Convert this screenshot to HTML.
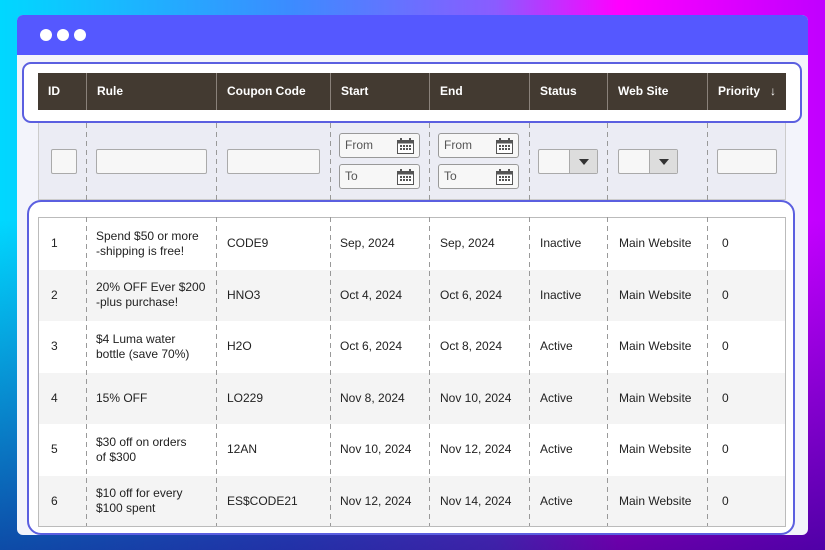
<!DOCTYPE html>
<html><head><meta charset="utf-8"><style>
*{box-sizing:border-box;margin:0;padding:0}
body{width:825px;height:550px;overflow:hidden;font-family:"Liberation Sans",sans-serif;position:relative;
background:linear-gradient(180deg,rgba(0,0,0,0) 40%,rgba(20,0,120,0.65) 100%),linear-gradient(90deg,#00d8ff 0%,#3b8cff 35%,#8a5cff 60%,#ff00ff 75%,#c000ff 100%);}
.win{position:absolute;left:17px;top:15px;width:791px;height:520px;background:#f3f4fb;border-radius:6px;overflow:hidden}
.bar{height:40px;background:#5558ff;position:relative}
.dot{position:absolute;top:14px;width:12px;height:12px;border-radius:50%;background:#fff}
.hbox{position:absolute;left:22px;top:62px;width:780px;height:61px;background:#fff;border:2px solid #5b5fe0;border-radius:9px}
.dbox{position:absolute;left:27px;top:200px;width:768px;height:335px;background:#fff;border:2px solid #5b5fe0;border-radius:14px}
.abs{position:absolute}
.hdr{left:38px;top:73px;width:748px;height:37px;background:#433a31;color:#fff;font-weight:bold;font-size:12px}
.hdr div{position:absolute;top:0;height:37px;line-height:37px;padding-left:10px;border-left:1px solid #8a817a}
.filt{left:38px;top:123px;width:748px;height:77px;background:#ebecf4;border:1px solid #ccc;border-top:none}
.vl{position:absolute;width:1px;background:repeating-linear-gradient(180deg,#999 0 5px,transparent 5px 9px)}
.inp{position:absolute;background:#f7f7f7;border:1px solid #aaa;border-radius:2px;height:25px}
.dt{position:absolute;height:25px;width:81px;border:1px solid #999;border-radius:3px;background:#f7f7f7;font-size:12px;color:#555;line-height:23px;padding-left:5px}
.cal{position:absolute;right:5px;top:4px;width:17px;height:16px}
.sel{position:absolute;top:149px;width:60px;height:25px;border:1px solid #aaa;border-radius:2px;background:#f7f7f7}
.sel span{position:absolute;right:0;top:0;width:28px;height:23px;background:#ddd;border-left:1px solid #aaa}
.sel span:after{content:"";position:absolute;left:9px;top:9px;border:5px solid transparent;border-top:6px solid #333}
.tbl{left:38px;top:217px;width:748px;height:310px;border:1px solid #bbb;overflow:hidden}
.row{position:absolute;left:0;width:748px;height:51.5px;font-size:12px;color:#222}
.row div{position:absolute;top:0;height:100%;display:flex;align-items:center;line-height:15px}
</style></head><body>
<svg width="0" height="0" style="position:absolute"><defs><symbol id="c" viewBox="0 0 17 16"><rect x="0.5" y="2.5" width="16" height="13" fill="#fff" stroke="#555"/><rect x="0.5" y="2.5" width="16" height="3" fill="#555"/><rect x="3" y="0" width="2" height="4" fill="#555"/><rect x="12" y="0" width="2" height="4" fill="#555"/><g fill="#555"><rect x="3" y="7" width="2" height="2"/><rect x="6" y="7" width="2" height="2"/><rect x="9" y="7" width="2" height="2"/><rect x="12" y="7" width="2" height="2"/><rect x="3" y="10" width="2" height="2"/><rect x="6" y="10" width="2" height="2"/><rect x="9" y="10" width="2" height="2"/><rect x="12" y="10" width="2" height="2"/></g></symbol></defs></svg>
<div class="win"><div class="bar"><div class="dot" style="left:23px"></div><div class="dot" style="left:40px"></div><div class="dot" style="left:57px"></div></div></div>
<div class="abs hbox"></div>
<div class="abs hdr">
<div style="left:0;border:none">ID</div><div style="left:48px">Rule</div><div style="left:178px">Coupon Code</div><div style="left:292px">Start</div><div style="left:391px">End</div><div style="left:491px">Status</div><div style="left:569px">Web Site</div><div style="left:669px;width:79px">Priority &nbsp;&nbsp;↓</div>
</div>
<div class="abs filt"></div>
<div class="dbox"></div>
<div class="abs tbl">
<div class="row" style="top:0;background:#fff"><div style="left:12px">1</div><div style="left:57px">Spend $50 or more<br>-shipping is free!</div><div style="left:188px">CODE9</div><div style="left:301px">Sep, 2024</div><div style="left:401px">Sep, 2024</div><div style="left:501px">Inactive</div><div style="left:580px">Main Website</div><div style="left:683px">0</div></div>
<div class="row" style="top:51.5px;background:#f4f4f4"><div style="left:12px">2</div><div style="left:57px">20% OFF Ever $200<br>-plus purchase!</div><div style="left:188px">HNO3</div><div style="left:301px">Oct 4, 2024</div><div style="left:401px">Oct 6, 2024</div><div style="left:501px">Inactive</div><div style="left:580px">Main Website</div><div style="left:683px">0</div></div>
<div class="row" style="top:103px;background:#fff"><div style="left:12px">3</div><div style="left:57px">$4 Luma water<br>bottle (save 70%)</div><div style="left:188px">H2O</div><div style="left:301px">Oct 6, 2024</div><div style="left:401px">Oct 8, 2024</div><div style="left:501px">Active</div><div style="left:580px">Main Website</div><div style="left:683px">0</div></div>
<div class="row" style="top:154.5px;background:#f4f4f4"><div style="left:12px">4</div><div style="left:57px">15% OFF</div><div style="left:188px">LO229</div><div style="left:301px">Nov 8, 2024</div><div style="left:401px">Nov 10, 2024</div><div style="left:501px">Active</div><div style="left:580px">Main Website</div><div style="left:683px">0</div></div>
<div class="row" style="top:206px;background:#fff"><div style="left:12px">5</div><div style="left:57px">$30 off on orders<br>of $300</div><div style="left:188px">12AN</div><div style="left:301px">Nov 10, 2024</div><div style="left:401px">Nov 12, 2024</div><div style="left:501px">Active</div><div style="left:580px">Main Website</div><div style="left:683px">0</div></div>
<div class="row" style="top:257.5px;background:#f4f4f4"><div style="left:12px">6</div><div style="left:57px">$10 off for every<br>$100 spent</div><div style="left:188px">ES$CODE21</div><div style="left:301px">Nov 12, 2024</div><div style="left:401px">Nov 14, 2024</div><div style="left:501px">Active</div><div style="left:580px">Main Website</div><div style="left:683px">0</div></div>
</div>
<div class="vl" style="left:86px;top:123px;height:77px"></div><div class="vl" style="left:216px;top:123px;height:77px"></div><div class="vl" style="left:330px;top:123px;height:77px"></div><div class="vl" style="left:429px;top:123px;height:77px"></div><div class="vl" style="left:529px;top:123px;height:77px"></div><div class="vl" style="left:607px;top:123px;height:77px"></div><div class="vl" style="left:707px;top:123px;height:77px"></div>
<div class="vl" style="left:86px;top:217px;height:309px"></div><div class="vl" style="left:216px;top:217px;height:309px"></div><div class="vl" style="left:330px;top:217px;height:309px"></div><div class="vl" style="left:429px;top:217px;height:309px"></div><div class="vl" style="left:529px;top:217px;height:309px"></div><div class="vl" style="left:607px;top:217px;height:309px"></div><div class="vl" style="left:707px;top:217px;height:309px"></div>
<div class="inp" style="left:51px;top:149px;width:26px"></div>
<div class="inp" style="left:96px;top:149px;width:111px"></div>
<div class="inp" style="left:227px;top:149px;width:93px"></div>
<div class="dt" style="left:339px;top:133px">From<svg class="cal"><use href="#c"/></svg></div>
<div class="dt" style="left:339px;top:164px">To<svg class="cal"><use href="#c"/></svg></div>
<div class="dt" style="left:438px;top:133px">From<svg class="cal"><use href="#c"/></svg></div>
<div class="dt" style="left:438px;top:164px">To<svg class="cal"><use href="#c"/></svg></div>
<div class="sel" style="left:538px"><span></span></div>
<div class="sel" style="left:618px"><span></span></div>
<div class="inp" style="left:717px;top:149px;width:60px"></div>
</body></html>
